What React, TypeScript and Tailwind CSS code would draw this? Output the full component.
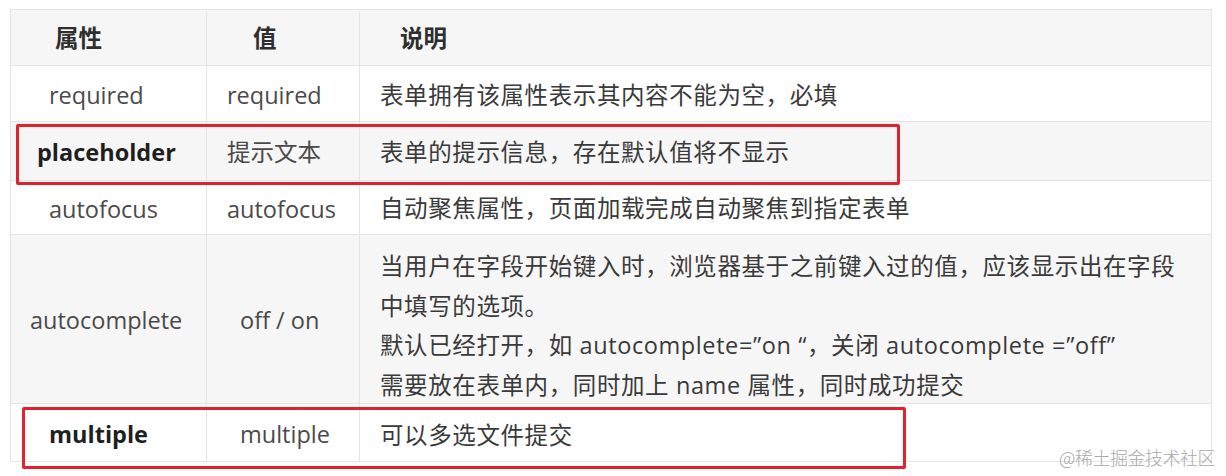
import React from "react";

type Row = {
  name: string;
  value: string;
  desc: string[];
  bold?: boolean;
  striped?: boolean;
  height: string;
  namePad: string;
  valuePad: string;
  descPad: string;
};

const rows: Row[] = [
  {
    name: "required",
    value: "required",
    desc: ["表单拥有该属性表示其内容不能为空，必填"],
    height: "h-[56px]",
    namePad: "pl-[38px]",
    valuePad: "pl-[20px]",
    descPad: "pt-[4px]",
  },
  {
    name: "placeholder",
    value: "提示文本",
    desc: ["表单的提示信息，存在默认值将不显示"],
    bold: true,
    striped: true,
    height: "h-[59px]",
    namePad: "pl-[26px]",
    valuePad: "pl-[20px]",
    descPad: "pt-[4px]",
  },
  {
    name: "autofocus",
    value: "autofocus",
    desc: ["自动聚焦属性，页面加载完成自动聚焦到指定表单"],
    height: "h-[54px]",
    namePad: "pl-[38px]",
    valuePad: "pl-[20px]",
    descPad: "pt-[3px]",
  },
  {
    name: "autocomplete",
    value: "off / on",
    desc: [
      "当用户在字段开始键入时，浏览器基于之前键入过的值，应该显示出在字段",
      "中填写的选项。",
      "默认已经打开，如 autocomplete=”on “，关闭 autocomplete =”off”",
      "需要放在表单内，同时加上 name 属性，同时成功提交",
    ],
    striped: true,
    height: "h-[169px]",
    namePad: "pl-[19px]",
    valuePad: "pl-[33px]",
    descPad: "pt-[14px]",
  },
  {
    name: "multiple",
    value: "multiple",
    desc: ["可以多选文件提交"],
    bold: true,
    height: "h-[58px]",
    namePad: "pl-[38px]",
    valuePad: "pl-[33px]",
    descPad: "pt-[6px]",
  },
];

export default function App() {
  return (
    <div
      className="relative w-[1226px] h-[476px] bg-white overflow-hidden"
      style={{ fontFamily: '"Open Sans", "Noto Sans CJK SC", sans-serif' }}
    >
      <div className="ml-[10px] mt-[9px] w-[1202px] border border-[#e4e4e4] text-[23.5px] text-[#4a4a4a]">
        {/* header */}
        <div className="flex h-[55px] bg-[#f6f6f6] font-bold text-[#2e2e2e] pt-[2px]">
          <div className="w-[196px] flex items-center pl-[44px] border-r border-[#e4e4e4]">属性</div>
          <div className="w-[153px] flex items-center pl-[46px] border-r border-[#e4e4e4]">值</div>
          <div className="flex-1 flex items-center pl-[40px]">说明</div>
        </div>

        {rows.map((row) => (
          <div
            key={row.name}
            className={`flex border-t border-[#e4e4e4] ${row.height} ${row.striped ? "bg-[#f6f6f6]" : "bg-white"}`}
          >
            <div
              className={`w-[196px] flex items-center pt-[4px] border-r border-[#e4e4e4] ${row.namePad} ${
                row.bold ? "font-bold text-[#1f1f1f]" : ""
              }`}
            >
              {row.name}
            </div>
            <div className={`w-[153px] flex items-center pt-[4px] border-r border-[#e4e4e4] ${row.valuePad}`}>
              {row.value}
            </div>
            <div
              className={`flex-1 flex flex-col justify-center pl-[20px] leading-[39.5px] tracking-[0.6px] text-[#3a3a3a] ${row.descPad}`}
            >
              {row.desc.map((line) => (
                <div key={line}>{line}</div>
              ))}
            </div>
          </div>
        ))}
      </div>

      {/* red highlight boxes */}
      <div className="absolute left-[16px] top-[124px] w-[884px] h-[61px] border-[3px] border-[#e3202b] rounded-[2px]" />
      <div className="absolute left-[22px] top-[407px] w-[884px] h-[62px] border-[3px] border-[#e3202b] rounded-[2px]" />

      {/* watermark */}
      <div
        className="absolute left-[1059px] top-[445px] text-[18px] leading-[24px] text-[#a8a8a8] tracking-[-0.5px]"
        style={{ fontFamily: '"Noto Sans CJK SC", sans-serif', fontWeight: 300 }}
      >
        @稀土掘金技术社区
      </div>
    </div>
  );
}
